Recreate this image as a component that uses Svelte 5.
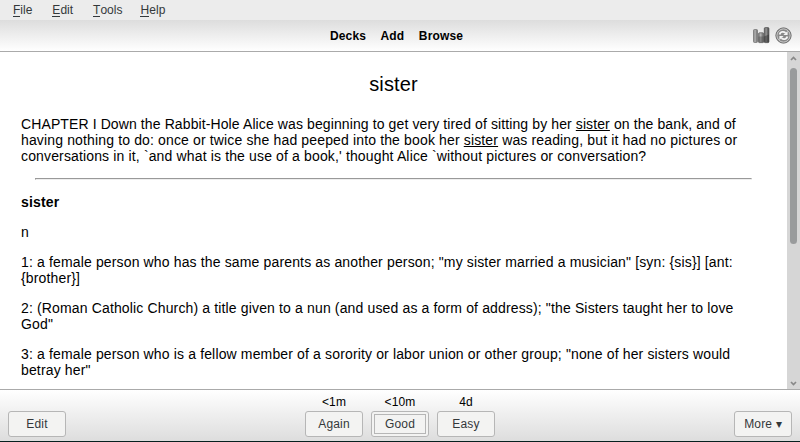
<script>
  const menus = ['File', 'Edit', 'Tools', 'Help'];
  const answers = [
    { due: '<1m', label: 'Again' },
    { due: '<10m', label: 'Good', focused: true },
    { due: '4d', label: 'Easy' }
  ];
</script>

<div class="window">
  <nav class="menubar">
    {#each menus as m}
      <span class="menu"><span class="key">{m[0]}</span>{m.slice(1)}</span>
    {/each}
  </nav>

  <header class="toolbar">
    <div class="links"><span>Decks</span><span>Add</span><span>Browse</span></div>
    <div class="icons">
      <svg width="17" height="17" viewBox="0 0 17 17">
        <defs>
          <linearGradient id="bar"><stop offset="0" stop-color="#777" /><stop offset=".4" stop-color="#b4b4b4" /><stop offset="1" stop-color="#606060" /></linearGradient>
          <linearGradient id="dark"><stop offset="0" stop-color="#555" /><stop offset=".4" stop-color="#999" /><stop offset="1" stop-color="#3c3c3c" /></linearGradient>
        </defs>
        <rect x=".5" y="2.5" width="4" height="13" rx="1" fill="url(#bar)" stroke="#777" stroke-width=".8" />
        <rect x="5.6" y="5.8" width="5" height="9.8" rx=".8" fill="url(#bar)" stroke="#666" stroke-width=".8" />
        <rect x="11.3" y=".6" width="4.6" height="15" rx="1" fill="url(#dark)" stroke="#555" stroke-width=".8" />
        <path d="M5.4 9.5h5.4v6H5.4z" fill="#444" opacity=".4" />
        <path d="M11 9.5l5-2v8h-5z" fill="#333" opacity=".5" />
      </svg>
      <svg width="17" height="17" viewBox="0 0 17 17">
        <circle cx="8.5" cy="8.5" r="7.6" fill="#898989" stroke="#636363" />
        <circle cx="8.5" cy="8.5" r="6.6" fill="none" stroke="#d0d0d0" stroke-width=".9" />
        <path d="M4.6 7.4C5.3 4.6 8.6 4.1 10.6 5.9M12.4 9.6c-.7 2.8-4 3.3-6 1.5" fill="none" stroke="#f4f4f4" stroke-width="1.9" />
        <path d="M12.6 3.9v4.2H8.4zM4.4 13.1V8.9h4.2z" fill="#f4f4f4" />
      </svg>
    </div>
  </header>

  <main class="view">
    <article class="card">
      <h1>sister</h1>
      <p class="context"><span class="opening">CHAPTER I Down the Rabbit-Hole Alice was beginning to get very tired of sitting by her <u>sister</u> on the bank, and of</span><br />having nothing to do: once or twice she had peeped into the book her <u>sister</u> was reading, but it had no pictures or<br />conversations in it, `and what is the use of a book,' thought Alice `without pictures or conversation?</p>
      <hr />
      <p><b>sister</b></p>
      <p>n</p>
      <p>1: a female person who has the same parents as another person; "my sister married a musician" [syn: {'{sis}'}] [ant:<br />{'{brother}'}]</p>
      <p>2: (Roman Catholic Church) a title given to a nun (and used as a form of address); "the Sisters taught her to love<br />God"</p>
      <p>3: a female person who is a fellow member of a sorority or labor union or other group; "none of her sisters would<br />betray her"</p>
    </article>
    <div class="scrollbar">
      <svg width="7" height="5" viewBox="0 0 7 5"><path d="M1 4l2.5-2.5L6 4" /></svg>
      <div class="thumb"></div>
      <svg width="7" height="5" viewBox="0 0 7 5"><path d="M1 1l2.5 2.5L6 1" /></svg>
    </div>
  </main>

  <footer class="bottom">
    <button>Edit</button>
    <div class="answers">
      {#each answers as a}
        <div class="answer">
          <span class="due">{a.due}</span>
          <button class:focused={a.focused}>{a.label}</button>
        </div>
      {/each}
    </div>
    <button>More ▾</button>
  </footer>
</div>

<style>
  .window {
    width: 800px;
    height: 442px;
    box-sizing: border-box;
    display: flex;
    flex-direction: column;
    overflow: hidden;
    border-bottom: 1px solid #06201f;
    background: #fff;
    color: #000;
    font: 12px 'Liberation Sans', Arial, sans-serif;
  }
  .menubar {
    flex: 0 0 20px;
    display: flex;
    gap: 20px;
    padding-left: 13px;
    line-height: 20px;
    background: #ececec;
    color: #33383a;
  }
  .menu:last-child {
    margin-left: -2px;
    letter-spacing: 0.1px;
  }
  .key {
    display: inline-block;
    height: 17px;
    line-height: 20px;
    border-bottom: 1px solid #33383a;
    box-sizing: border-box;
    vertical-align: top;
  }
  .toolbar {
    flex: 0 0 32px;
    box-sizing: border-box;
    display: grid;
    grid-template-columns: 1fr auto 1fr;
    align-items: center;
    border-bottom: 1px solid #aaa;
    background: linear-gradient(#ddd, #fff);
  }
  .links {
    grid-column: 2;
    display: flex;
    gap: 14.5px;
    padding-right: 7px;
    font-weight: bold;
    letter-spacing: 0.15px;
  }
  .icons {
    display: flex;
    justify-self: end;
    gap: 5px;
    padding: 0 8px 1px 0;
  }
  .view {
    flex: 1;
    min-height: 0;
    display: flex;
  }
  .card {
    flex: 1;
    overflow: hidden;
    padding: 20px 21px 0 21px;
    font-size: 14px;
    line-height: 16px;
    letter-spacing: 0.145px;
    white-space: nowrap;
  }
  .opening {
    letter-spacing: 0.107px;
  }
  h1 {
    margin: 0 0 20px;
    font-size: 20px;
    font-weight: normal;
    line-height: 24px;
    text-align: center;
  }
  p {
    margin: 0 0 14px;
  }
  hr {
    margin: 0 14px 14px;
    border: 1px solid;
    border-color: #999 #eee #eee #999;
  }
  .scrollbar {
    flex: 0 0 13px;
    box-sizing: border-box;
    display: flex;
    flex-direction: column;
    align-items: center;
    padding: 4px 0 3px;
    background: #d6d6d6;
  }
  .scrollbar path {
    fill: none;
    stroke: #888;
    stroke-width: 1.7;
  }
  .thumb {
    width: 7px;
    height: 176px;
    margin: 7px 0 auto;
    border-radius: 4px;
    background: #999b9c;
  }
  .bottom {
    flex: 0 0 52px;
    box-sizing: border-box;
    display: flex;
    justify-content: space-between;
    align-items: flex-end;
    padding: 0 8px 4px;
    border-top: 1px solid #aaa;
    background: linear-gradient(#fff, #ddd);
  }
  .answers {
    display: flex;
    gap: 8px;
  }
  .answer {
    display: flex;
    flex-direction: column;
    align-items: center;
  }
  .due {
    line-height: 14px;
    margin-bottom: 2px;
    letter-spacing: 0.15px;
  }
  button {
    width: 58px;
    height: 26px;
    box-sizing: border-box;
    padding: 0;
    border: 1px solid #b6b6b6;
    border-radius: 3px;
    background: #f3f3f2;
    color: #33383a;
    font: 12px 'Liberation Sans', Arial, sans-serif;
    letter-spacing: 0.15px;
    white-space: nowrap;
  }
  .focused {
    outline: 1px solid #b6b6b6;
    outline-offset: -4px;
  }
</style>
